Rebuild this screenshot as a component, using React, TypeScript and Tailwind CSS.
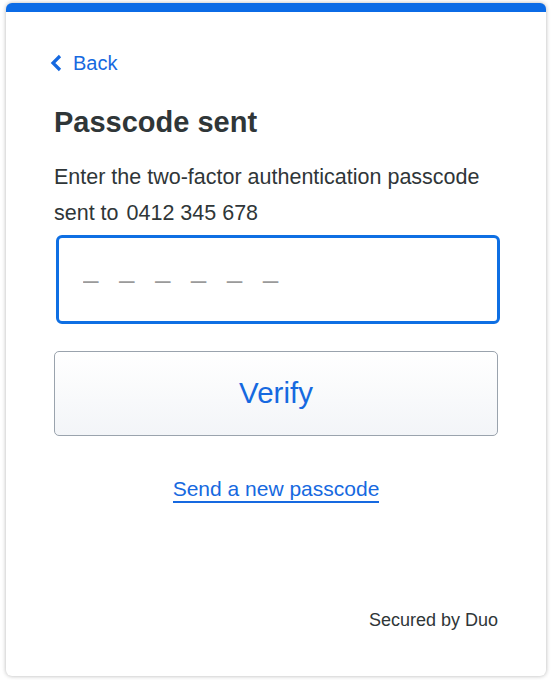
export default function App() {
  return (
    <div className="min-h-[680px] bg-white px-[6px] pt-[3px] pb-1 font-['Liberation_Sans',Arial,sans-serif]">
      <div className="flex h-[673px] flex-col rounded-md border-t-[9px] border-[#0b6be6] bg-white px-12 shadow-[0_0_4px_rgba(0,0,0,0.3)]">
        <a href="#" className="mt-[37px] ml-[-4px] flex items-center gap-[11px] text-[20px] leading-7 text-[#1669e0]">
          <svg width="12" height="18" viewBox="0 0 12 18" fill="none">
            <polyline points="10,2 3,9 10,16" stroke="currentColor" strokeWidth="3.2" strokeLinejoin="miter" />
          </svg>
          Back
        </a>
        <h1 className="mt-[29px] text-[29px] font-bold leading-8 text-[#2f3638]">Passcode sent</h1>
        <p className="mt-[21px] text-[21.5px] leading-9 text-[#2f3638]">
          Enter the two-factor authentication passcode sent to
          <span className="ml-2">0412 345 678</span>
        </p>
        <input
          type="text"
          placeholder="– – – – – –"
          className="mt-[4px] mr-[-2px] ml-[2px] h-[89px] rounded-md border-[3px] border-[#0e6fe3] px-[24px] text-[28px] tracking-[6.3px] text-[#2f3638] outline-none placeholder:text-[#9a9a9a]"
        />
        <button className="mt-[27px] h-[85px] rounded-[5px] border border-[#9aa3ad] bg-gradient-to-b from-white to-[#f3f5f8] text-[29.5px] text-[#1669e0]">
          Verify
        </button>
        <div className="mt-[41px] flex justify-center">
          <a href="#" className="border-b-2 border-[#1669e0] text-[21px] leading-6 text-[#1669e0]">
            Send a new passcode
          </a>
        </div>
        <div className="mt-auto mb-[42px] text-right text-[18px] text-[#2f3638]">Secured by Duo</div>
      </div>
    </div>
  )
}
